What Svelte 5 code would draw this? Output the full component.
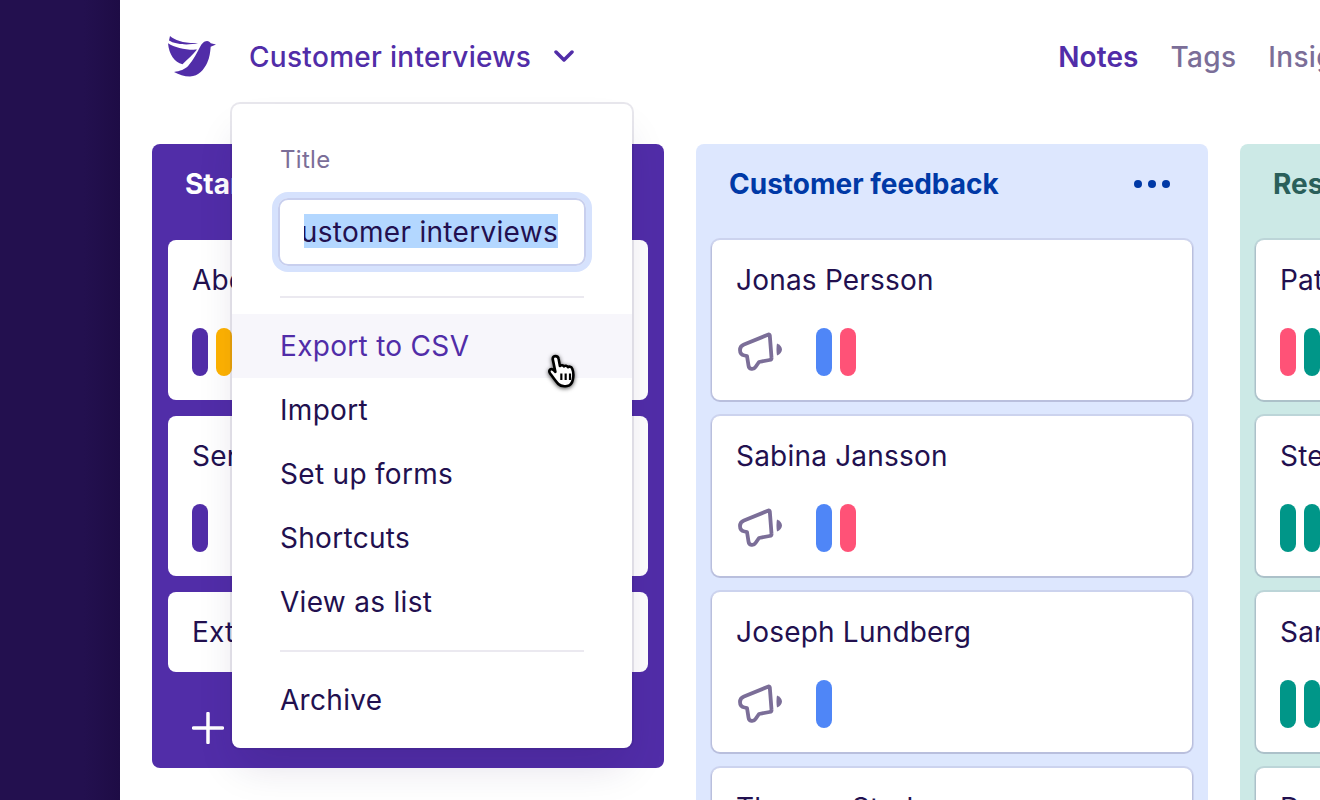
<script>
  const columns = [
    { name: 'Started', tone: 'purple', cards: [
      { name: 'Abel Nilsson', tags: ['violet', 'amber'] },
      { name: 'Serena Lind', tags: ['violet'] },
      { name: 'Extra notes', tags: [] }
    ], add: true },
    { name: 'Customer feedback', tone: 'blue', menu: true, cards: [
      { name: 'Jonas Persson', icon: true, tags: ['sky', 'rose'] },
      { name: 'Sabina Jansson', icon: true, tags: ['sky', 'rose'] },
      { name: 'Joseph Lundberg', icon: true, tags: ['sky'] },
      { name: 'Thomas Stark', icon: false, tags: [] }
    ] },
    { name: 'Research', tone: 'teal', cards: [
      { name: 'Patrik Olsson', tags: ['rose', 'green'] },
      { name: 'Stella Berg', tags: ['green', 'green'] },
      { name: 'Sara Holm', tags: ['green', 'green'] },
      { name: 'David Ek', tags: [] }
    ] }
  ];
  const menu = ['Import', 'Set up forms', 'Shortcuts', 'View as list'];
</script>

<div class="page">
  <aside class="rail"></aside>
  <main class="main">
    <header class="top">
      <svg class="logo" viewBox="168 36 48 41" width="48" height="41" aria-hidden="true">
        <path d="M170 36c5 4.500 14 7.500 28 7-11 2.800-23 1.200-29-2.500z" />
        <path d="M168 43.200c7 4.600 18 7 29 6.400-4 5-9.500 10-14.500 14.600-8-2.200-13.500-9.500-14.500-21z" />
        <path d="M174 72c6-1 11-2.500 14.500-6.500 5-5.500 8.500-13 11.500-18.500 1.500-3 4-6 7-6 1.800 0 3 1 3.800 2.300l5.200 1.200-5.300 2.300c-.5 5-1 11-3.500 16-3 6.500-8.500 13.500-17.200 13.700-6 0-11-2-16-4.500z" />
      </svg>
      <div class="title">
        <span>Customer interviews</span>
        <svg width="20" height="12" viewBox="0 0 20 12" aria-hidden="true"><path d="M2 2l8 8 8-8" /></svg>
      </div>
      <nav class="nav">
        <span class="active">Notes</span>
        <span>Tags</span>
        <span>Insights</span>
      </nav>
    </header>

    <section class="board">
      {#each columns as col}
        <div class="col {col.tone}">
          <div class="col-head">
            <h2>{col.name}</h2>
            {#if col.menu}
              <div class="dots"><i></i><i></i><i></i></div>
            {/if}
          </div>
          <div class="cards">
            {#each col.cards as card}
              <article class="card">
                <div class="card-name">{card.name}</div>
                {#if card.icon || card.tags.length}
                  <div class="meta">
                    {#if card.icon}
                      <svg class="horn" width="44" height="40" viewBox="0 0 44 40" aria-hidden="true">
                        <path class="stroke" d="M30.500 2.500 6 12.500C3.500 13.500 2 15.500 2 18c0 3 1.800 5 4.500 5.500L9 24l1.500 9.500c.5 4 5 4.500 7 1.500l3.500-5 10.500-2c1.500-.3 2.200-1.200 2-2.500L31.800 3.500c-.1-1-.8-1.300-1.300-1z" />
                        <path class="fill" d="M39 11.500c3 1 5 3.500 5 6s-2 5-5 6c-.7-3.500-.7-8.500 0-12z" />
                      </svg>
                    {/if}
                    <div class="pills">
                      {#each card.tags as t}<span class="pill {t}"></span>{/each}
                    </div>
                  </div>
                {/if}
              </article>
            {/each}
          </div>
          {#if col.add}
            <div class="add">
              <svg width="32" height="32" viewBox="0 0 32 32" aria-hidden="true"><path d="M16 1.500v29M1.500 16h29" /></svg>
            </div>
          {/if}
        </div>
      {/each}
    </section>
  </main>

  <div class="pop">
    <label class="label" for="t">Title</label>
    <div class="field" id="t">
      <div class="clip"><span class="sel">Customer interviews</span></div>
    </div>
    <hr />
    <div class="item hover">Export to CSV</div>
    {#each menu as m}<div class="item">{m}</div>{/each}
    <hr class="second" />
    <div class="item">Archive</div>
  </div>

  <svg class="cursor" width="35" height="39" viewBox="0 0 32 36" aria-hidden="true">
    <path d="M6 4.500c0-3.400 5-3.400 5.500 0l1.200 6.500c1.200-1 3-.8 3.700.5.900-1 3-.8 3.700.7 1-.9 3.100-.7 3.800 1 1.200 2.700 1.400 7 .8 10-.6 3.200-2.500 5.800-5.300 6.300-3 .5-6.200.2-8.200-1.800-2.500-2.500-5.500-7-7.700-10-1.400-2-.1-4.200 2-3.600 1 .3 2 1.200 3 2.400z" />
    <g><line x1="14" y1="18" x2="14" y2="24" /><line x1="18" y1="18" x2="18" y2="24" /><line x1="22" y1="18" x2="22" y2="24" /></g>
  </svg>
</div>

<style>
  :global(body) {
    margin: 0;
    background: #fff;
    font-family: Inter, "Liberation Sans", sans-serif;
    color: #22104f;
    letter-spacing: 0.3px;
  }
  .page {
    position: relative;
    display: flex;
    width: 1320px;
    height: 800px;
    overflow: hidden;
  }
  .rail {
    flex: 0 0 120px;
    background: linear-gradient(90deg, #23104f 0%, #23104f 70%, #1e0c45 100%);
  }
  .main {
    flex: 1;
    min-width: 0;
    padding: 0 32px;
  }
  .top {
    display: flex;
    align-items: center;
    height: 112px;
    padding-left: 16px;
    white-space: nowrap;
  }
  .logo { fill: #512da8; flex: none; }
  .title {
    display: flex;
    align-items: center;
    gap: 23px;
    margin-left: 33px;
    font-size: 28px;
    line-height: 36px;
    font-weight: 500;
    color: #512da8;
  }
  .title span { padding-top: 2px; }
  .title svg path { fill: none; stroke: #512da8; stroke-width: 3.500; stroke-linecap: round; stroke-linejoin: round; }
  .nav {
    display: flex;
    gap: 32px;
    margin-left: 484px;
    font-size: 28px;
    line-height: 36px;
    padding-top: 2px;
    font-weight: 500;
    color: #7b6e98;
  }
  .nav .active { color: #512da8; font-weight: 600; letter-spacing: 0.1px; }
  .board {
    display: flex;
    gap: 32px;
    align-items: flex-start;
    padding-top: 32px;
  }
  .col {
    flex: 0 0 512px;
    border-radius: 8px;
    padding: 0 16px;
    box-sizing: border-box;
  }
  .col.purple { background: #512da8; height: 624px; }
  .col.blue { background: #dde7fe; height: 800px; }
  .col.teal { background: #cce9e6; height: 800px; }
  .col-head {
    display: flex;
    align-items: center;
    justify-content: space-between;
    height: 80px;
    padding: 0 22px 0 17px;
  }
  .col-head h2 { margin: 0; font-size: 28px; font-weight: 700; letter-spacing: 0; }
  .purple h2 { color: #fff; }
  .blue h2 { color: #0039a6; }
  .teal h2 { color: #2a5f5a; }
  .dots { display: flex; gap: 6px; }
  .dots i { width: 8px; height: 8px; border-radius: 50%; background: #0039a6; }
  .cards {
    display: flex;
    flex-direction: column;
    gap: 16px;
    padding-top: 16px;
  }
  .card {
    box-sizing: border-box;
    min-height: 80px;
    padding: 20px 24px 0;
    background: #fff;
    border-radius: 8px;
    box-shadow: 0 0 0 2px rgba(34, 16, 79, 0.09), 0 1px 0 1px rgba(34, 16, 79, 0.1);
    white-space: nowrap;
    font-size: 28px;
    line-height: 40px;
    letter-spacing: 0.2px;
  }
  .purple .card { box-shadow: none; }
  .meta {
    display: flex;
    align-items: center;
    height: 48px;
    margin-top: 28px;
  }
  .card:has(.meta) { height: 160px; }
  .horn { flex: none; margin: 0 34px 0 2px; }
  .pills { display: flex; gap: 8px; }
  .pill { display: block; width: 16px; height: 48px; border-radius: 8px; }
  .pill.violet { background: #512da8; }
  .pill.amber { background: #ffb300; }
  .pill.sky { background: #4f86f7; }
  .pill.rose { background: #ff5277; }
  .pill.green { background: #009688; }
  .horn .stroke { fill: none; stroke: #7b6e98; stroke-width: 3.800; stroke-linejoin: round; }
  .horn .fill { fill: #7b6e98; }
  .add {
    display: flex;
    align-items: center;
    height: 80px;
    margin-top: 16px;
    padding-left: 24px;
  }
  .add svg path { fill: none; stroke: #fff; stroke-width: 3.500; stroke-linecap: round; }

  .pop {
    position: absolute;
    left: 232px;
    top: 104px;
    width: 400px;
    height: 644px;
    box-sizing: border-box;
    padding-top: 34px;
    background: #fff;
    border-radius: 8px;
    box-shadow: 0 0 0 2px rgba(34, 16, 79, 0.1), 0 24px 40px -8px rgba(34, 16, 79, 0.14);
    font-size: 28px;
  }
  .label {
    display: block;
    height: 44px;
    margin-left: 48px;
    font-size: 24px;
    line-height: 44px;
    color: #7b6e98;
  }
  .field {
    box-sizing: border-box;
    width: 308px;
    height: 68px;
    margin: 16px 0 0 46px;
    padding: 14px 26px 14px 24px;
    border: 2px solid #c8cfee;
    border-radius: 10px;
    box-shadow: 0 0 0 6px #d6e2fd;
  }
  .clip {
    display: flex;
    justify-content: flex-end;
    height: 34px;
    overflow: hidden;
  }
  .sel {
    flex: none;
    height: 34px;
    line-height: 36px;
    background: #b3d7ff;
    white-space: nowrap;
  }
  hr {
    height: 2px;
    border: 0;
    margin: 30px 48px 16px;
    background: #ebe9f0;
  }
  hr.second { margin: 16px 48px 16px; }
  .item {
    height: 64px;
    line-height: 65px;
    padding-left: 48px;
  }
  .item.hover { background: #f7f6fb; color: #512da8; }
  .cursor {
    position: absolute;
    left: 546px;
    top: 354px;
    filter: drop-shadow(0 1px 2px rgba(0, 0, 0, 0.7));
  }
  .cursor path { fill: #fff; stroke: #000; stroke-width: 2.400; stroke-linejoin: round; }
  .cursor line { stroke: #000; stroke-width: 2; }
</style>
